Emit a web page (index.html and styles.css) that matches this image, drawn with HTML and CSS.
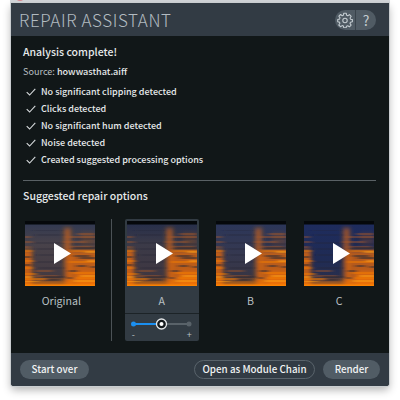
FILE: index.html
```html
<!DOCTYPE html>
<html lang="en">
<head>
    <meta charset="UTF-8">
    <meta name="viewport" content="width=device-width, initial-scale=1.0">
    <title>Repair Assistant</title>
    <link rel="stylesheet" href="styles.css">
</head>
<body>
    <!-- shared shapes -->
    <svg class="defs" width="0" height="0">
        <defs>
            <filter id="soft" x="0" y="0" width="1" height="1"><feGaussianBlur stdDeviation="2.5 0.6"/></filter>
            <filter id="haze" x="-0.2" y="-0.2" width="1.4" height="1.4"><feGaussianBlur stdDeviation="2.2"/></filter>
            <linearGradient id="floor" x1="0" y1="0" x2="0" y2="1">
                <stop offset="0" stop-color="#ff7a00" stop-opacity="0"/>
                <stop offset="1" stop-color="#ff7a00" stop-opacity=".8"/>
            </linearGradient>
            <symbol id="check" viewBox="0 0 10 8">
                <path d="M.7 4.2 3.6 7 9.3.8" fill="none" stroke="#d5d9db" stroke-width="1.1"/>
            </symbol>
            <symbol id="spectrum" viewBox="0 0 70 65">
                <g filter="url(#haze)" fill="#d96512">
                    <rect x="-4" y="29" width="11" height="38" opacity=".85"/>
                    <rect x="39" y="7" width="7" height="58" opacity=".6"/>
                    <rect x="42" y="29" width="32" height="37" opacity=".8"/>
                    <rect x="56" y="12" width="14" height="12" opacity=".2"/>
                    <rect x="52" y="50" width="22" height="16" opacity=".9"/>
                </g>
                <rect y="55" width="70" height="10" fill="url(#floor)"/>
                <g filter="url(#soft)" fill="none" stroke-width="1.5">
                    <path stroke="#b35b24" opacity=".55" d="M-2 16h8M42 16h30M-2 21h9M39 21h22M-2 26h7M43 26h24M52 13h18M10 50h18M8 55h26"/>
                    <path stroke="#f27c0c" opacity=".7" d="M-2 30h9M-2 40h10M-2 47h9M-2 53h14M46 30h26M44 41h28M48 52h24M-2 58h24M45 57h27"/>
                    <path stroke="#ffa31a" opacity=".7" d="M-2 56h9M-2 61h16M60 31h12M62 40h10M55 55h17M48 60h24"/>
                    <path stroke="#2c2734" opacity=".75" d="M47 27h26M49 35h16M54 37h18M52 45h9M66 46h6M17 56h22M44 50h8M20 59h15M-2 36h8M-2 44h8M42 57h7"/>
                    <path stroke="#171f30" opacity=".5" stroke-width="1" d="M8 9h28M10 14h27M49 18h23M8 22h30M10 28h26M12 34h26M9 41h26M12 47h26M48 23h24"/>
                </g>
                <path stroke="#ff8500" stroke-width="1.5" opacity=".85" d="M0 64.200h70"/>
                <rect width="70" height="3.500" fill="#05080b"/>
                <path d="M29 22v21l17-10.500z" fill="#fff"/>
            </symbol>
        </defs>
    </svg>

    <div class="backdrop"><span class="close-dot"></span></div>
    <div class="window">
        <header class="titlebar">
            <h1>REPAIR ASSISTANT</h1>
            <div class="tools">
                <button type="button" aria-label="Settings">
                    <svg width="16" height="16" viewBox="0 0 16 16" fill="none" stroke="#c3cbd0" stroke-width="1.1" stroke-linejoin="round">
                        <path d="M6.800 1.200h2.400l.4 2 1.200.5 1.700-1.100 1.700 1.700-1.100 1.700.5 1.200 1.800.4v2.200l-1.900.4-.5 1.200 1.100 1.700-1.700 1.700-1.700-1.100-1.200.5-.4 1.700H6.800l-.4-1.800-1.200-.5-1.700 1.100-1.700-1.700 1.100-1.700-.5-1.200-1.700-.4V7.500l1.800-.4.5-1.200-1.100-1.700 1.700-1.700 1.600 1.200 1.200-.5z"/>
                        <circle cx="8" cy="8.500" r="2.200"/>
                    </svg>
                </button>
                <button type="button" class="help">?</button>
            </div>
        </header>

        <main>
            <h2>Analysis complete!</h2>
            <p class="source">Source: <b>howwasthat.aiff</b></p>
            <ul class="results">
                <li><svg><use href="#check"/></svg>No significant clipping detected</li>
                <li><svg><use href="#check"/></svg>Clicks detected</li>
                <li><svg><use href="#check"/></svg>No significant hum detected</li>
                <li><svg><use href="#check"/></svg>Noise detected</li>
                <li><svg><use href="#check"/></svg>Created suggested processing options</li>
            </ul>
            <h2 class="options-title">Suggested repair options</h2>
            <div class="options">
                <div class="option original">
                    <svg class="thumb"><use href="#spectrum"/></svg>
                    <span>Original</span>
                </div>
                <div class="divider"></div>
                <div class="option selected">
                    <svg class="thumb"><use href="#spectrum"/></svg>
                    <span>A</span>
                    <div class="strength">
                        <svg width="63" height="12" viewBox="0 0 63 12">
                            <path d="M3 6h28" stroke="#1b8ff0" stroke-width="2"/>
                            <path d="M31 6h28" stroke="#596269" stroke-width="2"/>
                            <circle cx="3.500" cy="6" r="2.500" fill="#1b8ff0"/>
                            <circle cx="59" cy="6" r="2.500" fill="#596269"/>
                            <circle cx="31.500" cy="6" r="5" fill="#14191c" stroke="#e4e7e9" stroke-width="1.300"/>
                            <circle cx="31.500" cy="6" r="2" fill="#fff"/>
                        </svg>
                        <div class="signs"><i>-</i><i>+</i></div>
                    </div>
                </div>
                <div class="option option-b">
                    <svg class="thumb"><use href="#spectrum"/></svg>
                    <span>B</span>
                </div>
                <div class="option option-c">
                    <svg class="thumb"><use href="#spectrum"/></svg>
                    <span>C</span>
                </div>
            </div>
        </main>

        <footer>
            <button type="button" class="btn start">Start over</button>
            <button type="button" class="btn outline">Open as Module Chain</button>
            <button type="button" class="btn render">Render</button>
        </footer>
    </div>
</body>
</html>
```
FILE: styles.css
```css
* {
    box-sizing: border-box;
}
body {
    margin: 0;
    width: 400px;
    height: 400px;
    overflow: hidden;
    background: #fff;
    color: #e6e9ea;
    font-family: "Noto Sans CJK SC", "Noto Sans", sans-serif;
}
h1, h2, p, ul {
    margin: 0;
    padding: 0;
}
button {
    border: none;
    padding: 0;
    font-family: inherit;
    color: inherit;
}
.defs {
    position: absolute;
}
.backdrop {
    height: 3px;
    margin: 0 10px;
    background: #d3d6da;
    overflow: hidden;
}
.close-dot {
    display: block;
    width: 8px;
    height: 8px;
    margin: -7px 0 0 6px;
    border-radius: 50%;
    background: #d98b92;
}
.window {
    width: 378px;
    height: 383px;
    margin-left: 11px;
    display: flex;
    flex-direction: column;
    background: #111718;
    border-radius: 0 0 3px 3px;
    overflow: hidden;
    box-shadow: 0 0 0 1px #c9cdd0, 0 4px 9px rgba(0, 0, 0, 0.3);
}

/* title bar */
.titlebar {
    height: 33px;
    flex: none;
    display: flex;
    align-items: center;
    justify-content: space-between;
    padding: 0 13px 0 8px;
    background: #323b44;
}
h1 {
    font-size: 17px;
    font-weight: 300;
    line-height: 33px;
    letter-spacing: 0.6px;
    color: #b3bbc1;
}
.tools {
    display: flex;
    width: 41px;
    height: 20px;
    border-radius: 10px;
    overflow: hidden;
    background: #505b64;
}
.tools button {
    flex: 1;
    display: flex;
    align-items: center;
    justify-content: center;
    background: none;
}
.tools .help {
    border-left: 1px solid #39434b;
    font-size: 14px;
    line-height: 20px;
    color: #c3cbd0;
}

/* analysis */
main {
    flex: 1;
    padding: 7px 13px 0 12px;
}
h2 {
    font-size: 10.5px;
    font-weight: 500;
    line-height: 18px;
}
.source {
    margin-top: 1px;
    font-size: 9.1px;
    line-height: 18px;
    color: #b9bfc2;
}
.source b {
    font-weight: 500;
    color: #e6e9ea;
}
.results {
    list-style: none;
    margin-top: 3px;
    padding-bottom: 12px;
    border-bottom: 1px solid #5a6165;
}
.results li {
    display: flex;
    align-items: center;
    height: 17px;
    padding-left: 3px;
    font-size: 9px;
    font-weight: 500;
}
.results svg {
    width: 10px;
    height: 8px;
    margin-right: 5px;
}
.options-title {
    margin-top: 6px;
}

/* repair options */
.options {
    display: flex;
    margin-top: 14px;
}
.option {
    width: 74px;
    padding-top: 2px;
    display: flex;
    flex-direction: column;
    align-items: center;
    font-size: 10.6px;
    color: #b9c0c4;
}
.option span {
    margin-top: 6px;
    line-height: 18px;
}
.original span {
    padding-left: 3px;
}
.thumb {
    width: 70px;
    height: 65px;
    background: linear-gradient(#2f3852, #48424a 35%, #42383f);
}
.divider {
    width: 1px;
    height: 122px;
    margin: 0 13px 0 14px;
    background: #4b5256;
}
.selected {
    height: 122px;
    background: #323b43;
    border-radius: 2px;
    margin-right: 15px;
}
.selected .thumb {
    background: linear-gradient(#242d4a, #3b3a48 35%, #40363f);
}
.strength {
    width: 74px;
    margin-top: 3px;
    padding-top: 4px;
    border-top: 1px solid #1c2327;
    text-align: center;
}
.strength svg {
    display: block;
    margin: 0 auto;
}
.signs {
    display: flex;
    justify-content: space-between;
    padding: 0 7px;
    font-size: 9px;
    line-height: 9px;
}
.signs i {
    font-style: normal;
}
.option-b {
    margin-right: 15px;
}
.option-b .thumb {
    background: linear-gradient(#2b365a, #353850 50%, #38343f);
}
.option-c .thumb {
    background: linear-gradient(#1e2c5e, #1f2b54 60%, #2d304a);
}

/* footer */
footer {
    height: 33px;
    flex: none;
    display: flex;
    align-items: center;
    padding: 0 9px;
    background: #323b44;
}
.btn {
    height: 19px;
    border-radius: 10px;
    background: #515c65;
    color: #f0f2f3;
    font-size: 9.8px;
    font-weight: 500;
    line-height: 17px;
    white-space: nowrap;
}
.start {
    width: 69px;
    margin-right: auto;
}
.outline {
    width: 121px;
    background: none;
    border: 1px solid #59636b;
}
.render {
    width: 57px;
    margin-left: 8px;
}
```
